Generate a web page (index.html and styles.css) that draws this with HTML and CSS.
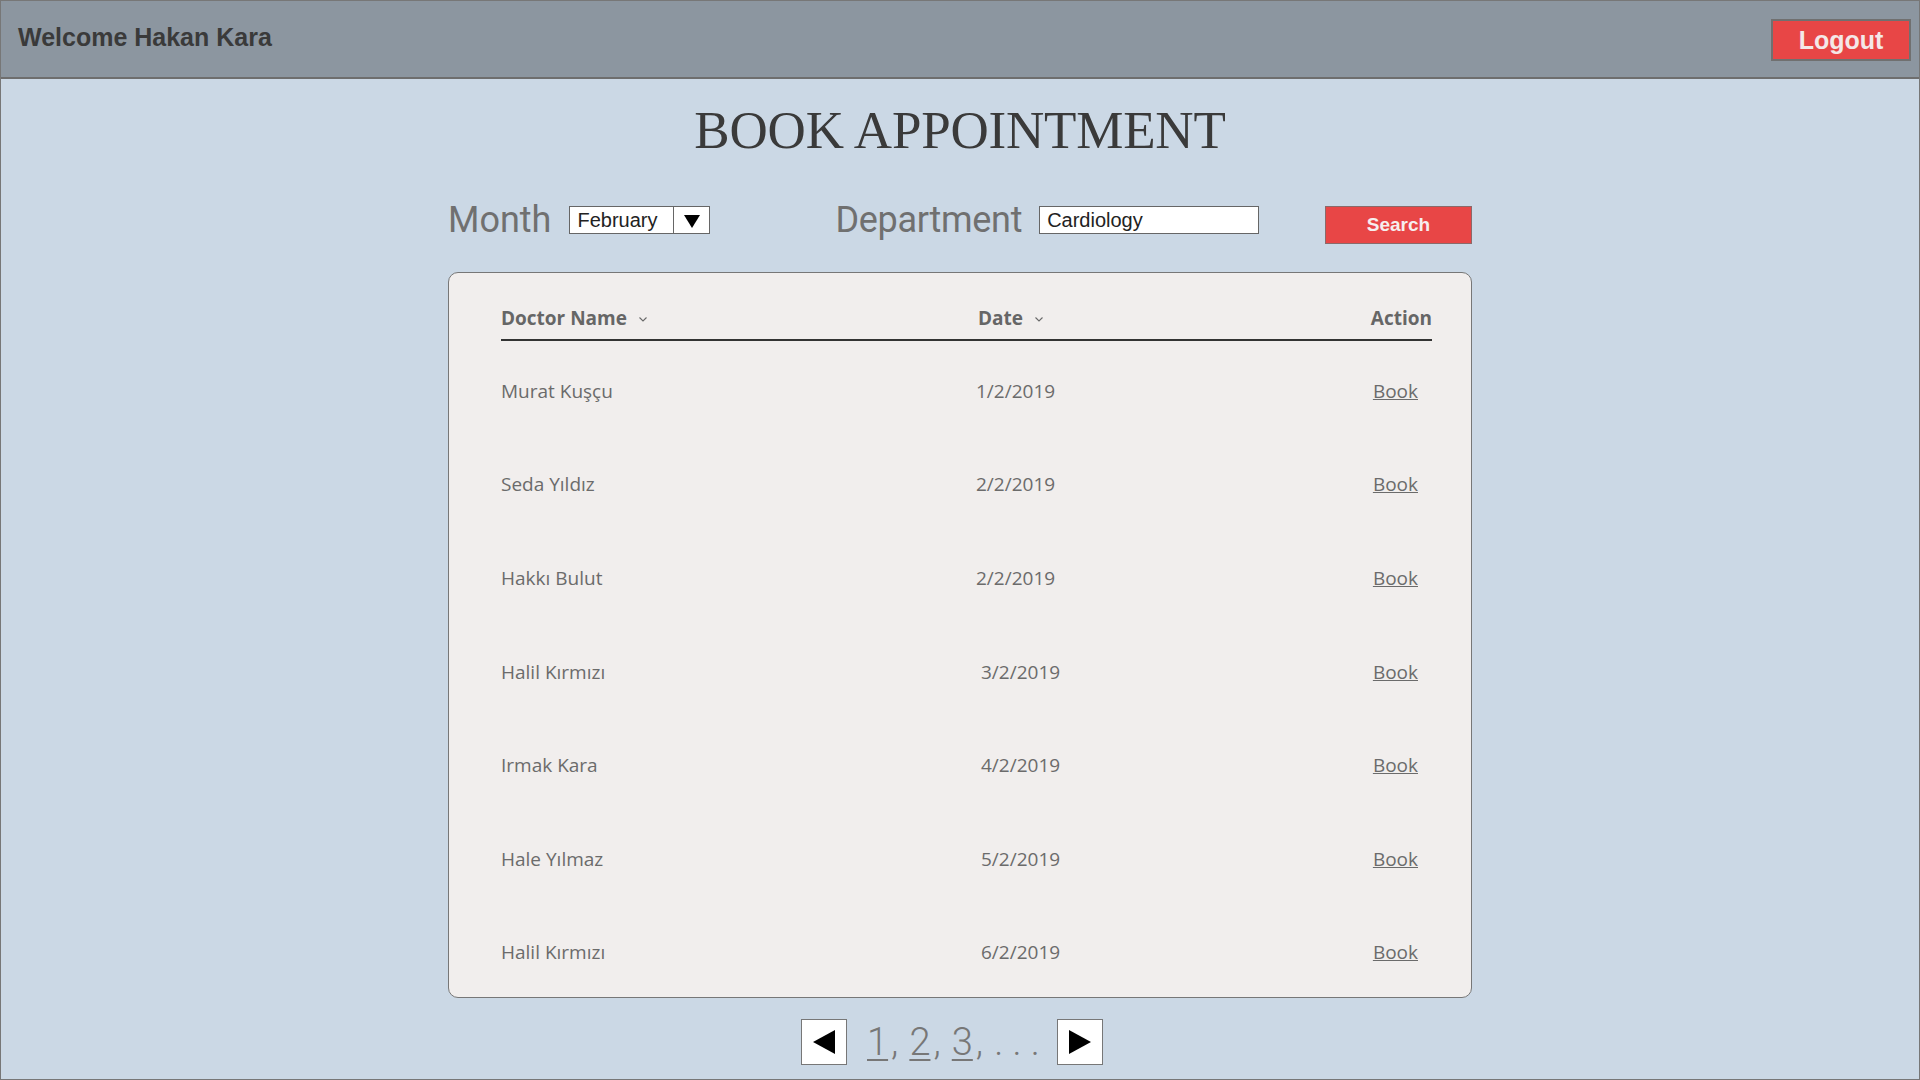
FILE: index.html
```html
<!DOCTYPE html>
<html lang="en">
<head>
<meta charset="utf-8">
<title>Book Appointment</title>
<link rel="stylesheet" href="styles.css">
</head>
<body>
<div class="page">
  <header class="topbar">
    <div class="welcome">Welcome Hakan Kara</div>
    <button class="logout">Logout</button>
  </header>

  <main class="main">
    <h1 class="title">BOOK APPOINTMENT</h1>

    <div class="filters">
      <span class="label label-month">Month</span>
      <div class="select">
        <span class="select-value">February</span>
        <span class="select-arrow">
          <svg width="16" height="13" viewBox="0 0 16 13"><polygon points="0,0 16,0 8,13" fill="#000"/></svg>
        </span>
      </div>
      <span class="label label-dept">Department</span>
      <div class="input">Cardiology</div>
      <button class="search">Search</button>
    </div>

    <section class="card">
      <div class="thead">
        <div class="th">Doctor Name <svg class="chev" width="8" height="5" viewBox="0 0 8 5"><polyline points="0.5,0.5 4,4 7.5,0.5" fill="none" stroke="#6a6a6a" stroke-width="1.1"/></svg></div>
        <div class="th th-date">Date <svg class="chev" width="8" height="5" viewBox="0 0 8 5"><polyline points="0.5,0.5 4,4 7.5,0.5" fill="none" stroke="#6a6a6a" stroke-width="1.1"/></svg></div>
        <div class="th th-action">Action</div>
      </div>
      <div class="row"><span class="name">Murat Kuşçu</span><span class="date">1/2/2019</span><span class="action"><a href="#" class="book">Book</a></span></div>
      <div class="row"><span class="name">Seda Yıldız</span><span class="date">2/2/2019</span><span class="action"><a href="#" class="book">Book</a></span></div>
      <div class="row"><span class="name">Hakkı Bulut</span><span class="date">2/2/2019</span><span class="action"><a href="#" class="book">Book</a></span></div>
      <div class="row"><span class="name">Halil Kırmızı</span><span class="date shift">3/2/2019</span><span class="action"><a href="#" class="book">Book</a></span></div>
      <div class="row"><span class="name">Irmak Kara</span><span class="date shift">4/2/2019</span><span class="action"><a href="#" class="book">Book</a></span></div>
      <div class="row"><span class="name">Hale Yılmaz</span><span class="date shift">5/2/2019</span><span class="action"><a href="#" class="book">Book</a></span></div>
      <div class="row"><span class="name">Halil Kırmızı</span><span class="date shift">6/2/2019</span><span class="action"><a href="#" class="book">Book</a></span></div>
    </section>

    <nav class="pager">
      <span class="pbtn">
        <svg width="22" height="24" viewBox="0 0 22 24"><polygon points="22,0 22,24 0,12" fill="#000"/></svg>
      </span>
      <span class="pages">
        <a href="#" class="pnum">1</a><span class="sep">,</span><a href="#" class="pnum">2</a><span class="sep">,</span><a href="#" class="pnum">3</a><span class="sep">,</span><span class="dots">. . .</span>
      </span>
      <span class="pbtn">
        <svg width="22" height="24" viewBox="0 0 22 24"><polygon points="0,0 0,24 22,12" fill="#000"/></svg>
      </span>
    </nav>
  </main>
</div>
</body>
</html>
```

FILE: styles.css
```css
* { box-sizing: border-box; }

html, body {
  margin: 0;
  padding: 0;
}

body {
  width: 1920px;
  height: 1080px;
  overflow: hidden;
  background: #cbd8e5;
  font-family: "Open Sans", "Liberation Sans", sans-serif;
}

.page {
  width: 1920px;
  height: 1080px;
  border: 1px solid #777777;
  background: #cbd8e5;
  display: flex;
  flex-direction: column;
}

.topbar {
  height: 78px;
  flex: none;
  background: #8c96a0;
  border-bottom: 2px solid #6e6e6e;
  display: flex;
  align-items: center;
  justify-content: space-between;
  padding: 0 8px 0 17px;
}

.welcome {
  font-family: "Liberation Sans", Arial, sans-serif;
  font-weight: bold;
  font-size: 25px;
  color: #3a3a3a;
  margin-bottom: 4px;
}

.logout {
  width: 140px;
  height: 42px;
  margin-top: 2px;
  background: #e84646;
  border: 2px solid #707070;
  color: #f4e8e8;
  font-family: "Liberation Sans", Arial, sans-serif;
  font-weight: bold;
  font-size: 25px;
  padding: 0;
  cursor: pointer;
}

.main {
  width: 1024px;
  margin: 0 auto;
  display: flex;
  flex-direction: column;
}

.title {
  margin: 25px 0 0 0;
  height: 53px;
  line-height: 53px;
  font-family: "Liberation Serif", "Times New Roman", serif;
  font-weight: normal;
  font-size: 53px;
  color: #3a3a3a;
  text-align: center;
  letter-spacing: -0.2px;
}

.filters {
  margin-top: 49px;
  display: flex;
  align-items: flex-start;
  height: 38px;
}

.label {
  font-family: Roboto, "Open Sans", sans-serif;
  font-size: 36px;
  line-height: 28px;
  color: #707070;
}

.label-month { margin-left: 0; }
.label-dept { margin-left: 125px; letter-spacing: -0.3px; }

.select {
  margin-left: 18px;
  width: 141px;
  height: 28px;
  display: flex;
  background: #ffffff;
  border: 1px solid #666666;
}

.select-value {
  width: 104px;
  border-right: 1px solid #666666;
  font-family: "Liberation Sans", Arial, sans-serif;
  font-size: 20px;
  line-height: 26px;
  color: #222222;
  padding-left: 7px;
}

.select-arrow {
  flex: 1;
  display: flex;
  align-items: center;
  justify-content: center;
  padding-top: 2px;
}

.input {
  margin-left: 17px;
  width: 220px;
  height: 28px;
  background: #ffffff;
  border: 1px solid #666666;
  font-family: "Liberation Sans", Arial, sans-serif;
  font-size: 20px;
  line-height: 26px;
  color: #222222;
  padding-left: 7px;
}

.search {
  margin-left: auto;
  width: 147px;
  height: 38px;
  background: #e84646;
  border: 1px solid #8a6a6a;
  color: #f6eeee;
  font-family: "Liberation Sans", Arial, sans-serif;
  font-weight: bold;
  font-size: 19px;
  padding: 0;
  cursor: pointer;
}

.card {
  margin-top: 28px;
  height: 726px;
  background: #f1eeed;
  border: 1px solid #777777;
  border-radius: 10px;
  padding: 33px 39px 0 52px;
  overflow: hidden;
}

.thead {
  display: grid;
  grid-template-columns: 475px 1fr auto;
  border-bottom: 2px solid #333333;
  padding-bottom: 9px;
}

.th {
  font-family: "Open Sans", sans-serif;
  font-weight: bold;
  font-size: 19px;
  line-height: 24px;
  color: #666666;
  display: flex;
  align-items: center;
}

.th-date { padding-left: 2px; }

.chev {
  margin-left: 12px;
  margin-top: 3px;
}

.row {
  display: grid;
  grid-template-columns: 475px 1fr auto;
  align-items: center;
  height: 93.6px;
}

.thead + .row { margin-top: 3px; }

.name, .date, .book {
  font-family: "Open Sans", sans-serif;
  font-size: 19px;
  line-height: 26px;
  color: #6b6b6b;
}

.date.shift { padding-left: 5px; }

.action { text-align: right; }

.book {
  color: #6b6b6b;
  text-decoration: underline;
  margin-right: 14px;
}

.pager {
  margin-top: 21px;
  padding-left: 353px;
  display: flex;
  align-items: center;
  height: 46px;
}

.pbtn {
  flex: none;
  width: 46px;
  height: 46px;
  background: #ffffff;
  border: 1px solid #777777;
  display: flex;
  align-items: center;
  justify-content: center;
}

.pages {
  flex: none;
  display: flex;
  align-items: baseline;
  white-space: nowrap;
  margin: 0 17px 0 20px;
  font-family: Roboto, "Open Sans", sans-serif;
  font-weight: 300;
  font-size: 38px;
  line-height: 46px;
  color: #777777;
}

.pnum {
  color: #777777;
  text-decoration: underline;
  text-decoration-thickness: 2px;
  text-underline-offset: 4px;
}

.sep {
  margin: 0 11px 0 3px;
}

.dots {
  white-space: pre;
}
```
